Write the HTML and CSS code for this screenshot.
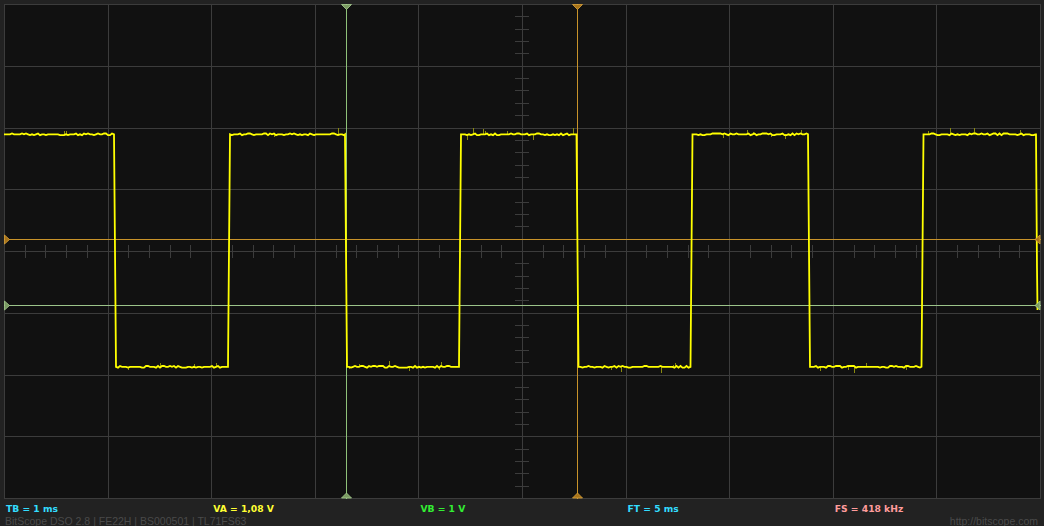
FILE: index.html
```html
<!DOCTYPE html>
<html>
<head>
<meta charset="utf-8">
<link rel="stylesheet" href="styles.css">
</head>
<body>
<div class="scope">
  <div class="screen">
    <svg class="plot" width="1037" height="495" viewBox="0 0 1037 495" xmlns="http://www.w3.org/2000/svg" shape-rendering="crispEdges">
      <rect x="0" y="0" width="1037" height="495" fill="#111111"/>
      <g id="grid" stroke="#3c3c3c" stroke-width="1"></g>
      <g id="ticks" stroke="#3c3c3c" stroke-width="1"></g>
      <g class="cursors" shape-rendering="auto">
        <line x1="342.5" y1="0" x2="342.5" y2="495" stroke="#8fc27a" stroke-width="1"/>
        <line x1="573.5" y1="0" x2="573.5" y2="495" stroke="#c8932a" stroke-width="1"/>
        <line x1="0" y1="235.5" x2="1037" y2="235.5" stroke="#c8932a" stroke-width="1"/>
        <line x1="0" y1="301.5" x2="1037" y2="301.5" stroke="#9cc48a" stroke-width="1"/>
      </g>
      <g id="noise" stroke="#8a8a10" stroke-width="1"></g>
      <path id="trace" fill="none" stroke="#ffff00" stroke-width="1.8" stroke-linejoin="miter" shape-rendering="auto"/>
      <g class="markers" stroke-width="0.8" shape-rendering="auto">
        <polygon points="337.5,0.5 347.5,0.5 342.5,5.5" fill="#7a9a62" stroke="#a8cf90"/>
        <polygon points="337.5,494 347.5,494 342.5,489" fill="#7a9a62" stroke="#a8cf90"/>
        <polygon points="568.5,0.5 578.5,0.5 573.5,5.5" fill="#a8741a" stroke="#d9a23a"/>
        <polygon points="568.5,494 578.5,494 573.5,489" fill="#a8741a" stroke="#d9a23a"/>
        <polygon points="0.5,231 0.5,240 5.5,235.5" fill="#a8741a" stroke="#d9a23a"/>
        <polygon points="1036,231 1036,240 1031,235.5" fill="#a8741a" stroke="#d9a23a"/>
        <polygon points="0.5,297 0.5,306 5.5,301.5" fill="#7a9a62" stroke="#a8cf90"/>
        <polygon points="1036,297 1036,306 1031,301.5" fill="#7a9a62" stroke="#a8cf90"/>
      </g>
    </svg>
  </div>
  <footer class="status">
    <div class="readouts">
      <span class="tb">TB = 1 ms</span>
      <span class="va">VA = 1,08 V</span>
      <span class="vb">VB = 1 V</span>
      <span class="ft">FT = 5 ms</span>
      <span class="fs">FS = 418 kHz</span>
    </div>
    <div class="info">
      <span>BitScope DSO 2.8 | FE22H | BS000501 | TL71FS63</span>
      <span>http://bitscope.com</span>
    </div>
  </footer>
</div>
<script src="script.js"></script>
</body>
</html>
```

FILE: styles.css
```css
html, body {
  margin: 0;
  padding: 0;
  background: #222222;
}
.scope {
  width: 1044px;
  height: 526px;
  display: flex;
  flex-direction: column;
  background: #222222;
  overflow: hidden;
}
.screen {
  padding: 4px 3px 0 4px;
  height: 495px;
}
.plot {
  display: block;
}
.status {
  flex: 1;
  padding-top: 5px;
}
.readouts {
  display: grid;
  grid-template-columns: repeat(5, 207.2px);
  padding-left: 6px;
  font-family: "DejaVu Sans", sans-serif;
  font-weight: bold;
  font-size: 9.2px;
  line-height: 10px;
  height: 10px;
}
.tb, .ft { color: #33ddff; }
.va { color: #ffff33; }
.vb { color: #33ee33; }
.fs { color: #ff9c9c; }
.info {
  display: flex;
  justify-content: space-between;
  padding: 1px 6px 0 5px;
  font-family: "Liberation Sans", Arial, sans-serif;
  font-size: 10.5px;
  line-height: 12px;
  color: #4a4a4a;
}
```

FILE: script.js
```js
(function () {
  var NS = "http://www.w3.org/2000/svg";
  function line(g, x1, y1, x2, y2) {
    var l = document.createElementNS(NS, "line");
    l.setAttribute("x1", x1); l.setAttribute("y1", y1);
    l.setAttribute("x2", x2); l.setAttribute("y2", y2);
    g.appendChild(l);
  }
  var grid = document.getElementById("grid");
  for (var i = 0; i <= 10; i++) {
    var x = Math.round(103.6 * i) + 0.5;
    line(grid, x, 0, x, 495);
  }
  for (var j = 0; j <= 8; j++) {
    var y = Math.round(61.75 * j) + 0.5;
    line(grid, 0, y, 1037, y);
  }
  var ticks = document.getElementById("ticks");
  for (var k = 1; k < 50; k++) {
    if (k % 5 === 0) continue;
    var tx = Math.round(20.72 * k) + 0.5;
    line(ticks, tx, 241, tx, 254);
  }
  for (var m = 1; m < 40; m++) {
    if (m % 5 === 0) continue;
    var ty = Math.round(12.35 * m) + 0.5;
    line(ticks, 511, ty, 525, ty);
  }

  var seed = 12345;
  function rnd() { seed = (seed * 1103515245 + 12345) & 0x7fffffff; return seed / 0x7fffffff; }

  var H = 130.3, L = 362.8;
  var falls = [110, 341, 572.5, 804, 1032];
  var rises = [224, 455, 686.5, 917.5];
  var d = "M0 " + H;
  var noise = document.getElementById("noise");
  function flat(x0, x1, level) {
    var s = "";
    for (var x = x0 + 2; x < x1; x += 2) {
      var off = 0;
      var r = rnd();
      if (r < 0.25) off = -0.8; else if (r < 0.5) off = 0.8;
      s += " L" + x + " " + (level + off).toFixed(1);
      if (rnd() < 0.08) {
        var h = 2 + Math.round(rnd() * 4);
        var up = rnd() < 0.5 ? -1 : 1;
        line(noise, x + 0.5, level, x + 0.5, level + up * h);
      }
    }
    return s;
  }
  var cur = 0;
  for (var n = 0; n < falls.length; n++) {
    d += flat(cur, falls[n], H);
    d += " L" + falls[n] + " " + H;
    if (n === falls.length - 1) {
      d += " L" + (falls[n] + 1) + " " + 264 + " L" + (falls[n] + 1.5) + " " + 306;
      break;
    }
    d += " L" + (falls[n] + 2) + " " + L;
    d += flat(falls[n] + 2, rises[n], L);
    d += " L" + rises[n] + " " + L;
    d += " L" + (rises[n] + 2) + " " + H;
    cur = rises[n] + 2;
  }
  document.getElementById("trace").setAttribute("d", d);
})();
```
